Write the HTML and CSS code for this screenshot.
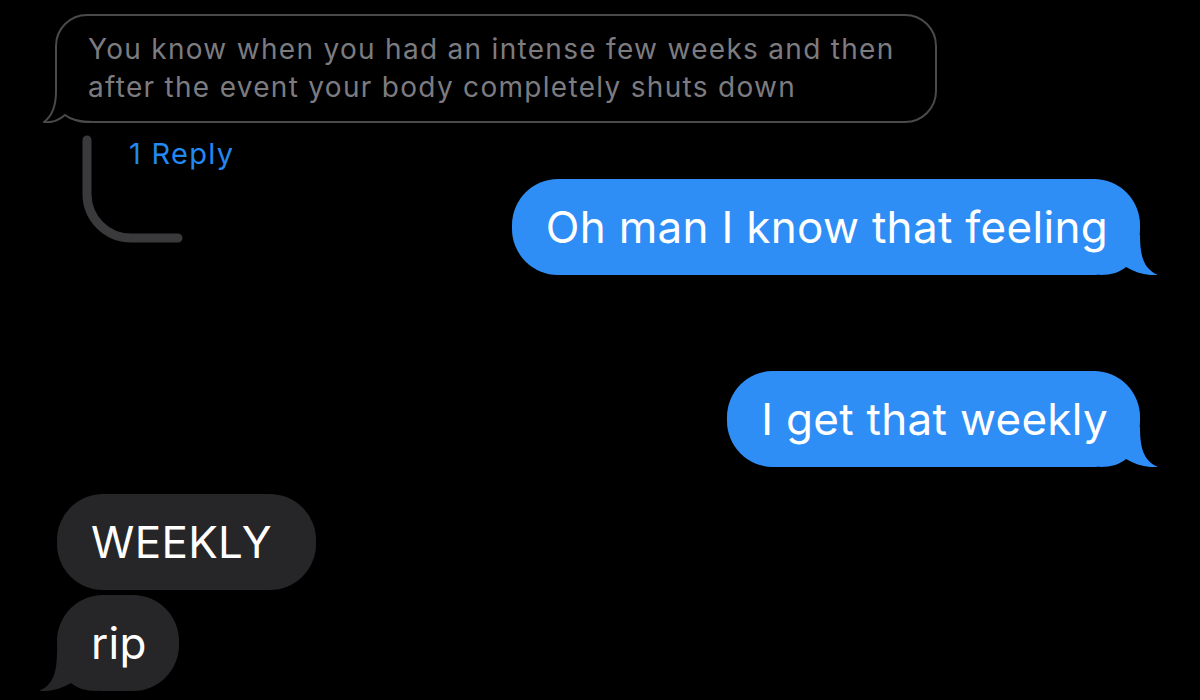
FILE: index.html
```html
<!DOCTYPE html>
<html>
<head>
<meta charset="utf-8">
<link rel="stylesheet" href="styles.css">
</head>
<body>
<div class="chat">
  <div class="quoted">
    <p class="quoted-text">You know when you had an intense few weeks and then<br>after the event your body completely shuts down</p>
    <svg class="tail-outline" width="50" height="50" viewBox="0 0 50 50"><path d="M13 0 L13 18 C13 34 8 44 1 49 C8 50 16 47 22 42 C28 47 36 49 50 49" fill="#000" stroke="#4a4a4c" stroke-width="2"/></svg>
  </div>
  <div class="reply-row">
    <svg class="thread-line" width="110" height="115" viewBox="0 0 110 115"><path d="M9 8 L9 62 A44 44 0 0 0 53 106 L100 106" fill="none" stroke="#3a3a3c" stroke-width="9" stroke-linecap="round"/></svg>
    <span class="reply-count">1 Reply</span>
  </div>
  <div class="row sent-row first-sent">
    <div class="bubble sent"><span class="msg">Oh man I know that feeling</span><svg class="tail tail-right" width="60" height="40" viewBox="0 0 60 40"><path d="M0 40 L0 0 L40 0 C40 22 44 34 58 40 C48 41 36 38 26 32 C20 37 12 40 0 40 Z" fill="#2f8ef6"/></svg></div>
  </div>
  <div class="row sent-row second-sent">
    <div class="bubble sent"><span class="msg">I get that weekly</span><svg class="tail tail-right" width="60" height="40" viewBox="0 0 60 40"><path d="M0 40 L0 0 L40 0 C40 22 44 34 58 40 C48 41 36 38 26 32 C20 37 12 40 0 40 Z" fill="#2f8ef6"/></svg></div>
  </div>
  <div class="row recv-row first-recv">
    <div class="bubble recv weekly"><span class="msg">WEEKLY</span></div>
  </div>
  <div class="row recv-row second-recv">
    <div class="bubble recv"><span class="msg">rip</span><svg class="tail tail-left" width="60" height="40" viewBox="0 0 60 40"><path d="M0 40 L0 0 L40 0 C40 22 44 34 58 40 C48 41 36 38 26 32 C20 37 12 40 0 40 Z" fill="#262628"/></svg></div>
  </div>
</div>
</body>
</html>
```
FILE: styles.css
```css
html, body {
  margin: 0;
  padding: 0;
  background: #000;
}
body {
  width: 1200px;
  height: 700px;
  overflow: hidden;
  font-family: Inter, "Liberation Sans", sans-serif;
}
.chat {
  display: flex;
  flex-direction: column;
  padding-top: 14px;
}
.quoted {
  position: relative;
  align-self: flex-start;
  margin-left: 55px;
  border: 2px solid #4a4a4c;
  border-radius: 32px;
  padding: 14px 0 15px 31px;
  width: 847px;
}
.quoted-text {
  margin: 0;
  color: #7c7c80;
  font-size: 28px;
  line-height: 38px;
  letter-spacing: 1.3px;
  white-space: nowrap;
}
.tail-outline {
  position: absolute;
  left: -14px;
  bottom: -2px;
}
.reply-row {
  position: relative;
  height: 56px;
  padding-left: 129px;
  box-sizing: border-box;
  padding-top: 16px;
}
.thread-line {
  position: absolute;
  left: 78px;
  top: 9px;
}
.reply-count {
  color: #2388f2;
  font-size: 29px;
  line-height: 30px;
  letter-spacing: 1.3px;
}
.row {
  display: flex;
}
.sent-row {
  justify-content: flex-end;
  padding-right: 60px;
}
.recv-row {
  justify-content: flex-start;
  padding-left: 57px;
}
.bubble {
  position: relative;
  height: 96px;
  display: flex;
  align-items: center;
  padding: 0 32px 0 34px;
  border-radius: 46px;
  font-size: 44px;
  letter-spacing: 0.3px;
  color: #fff;
  box-sizing: border-box;
  white-space: nowrap;
}
.msg {
  position: relative;
  z-index: 1;
}
.sent {
  background: #2f8ef6;
}
.recv {
  background: #262628;
}
.weekly {
  padding-right: 44px;
}
.second-sent {
  margin-top: 96px;
}
.first-recv {
  margin-top: 27px;
}
.second-recv {
  margin-top: 5px;
}
.tail {
  position: absolute;
  bottom: 0;
  z-index: 0;
}
.tail-right {
  right: -20px;
}
.tail-left {
  left: -20px;
  transform: scaleX(-1);
}
```
